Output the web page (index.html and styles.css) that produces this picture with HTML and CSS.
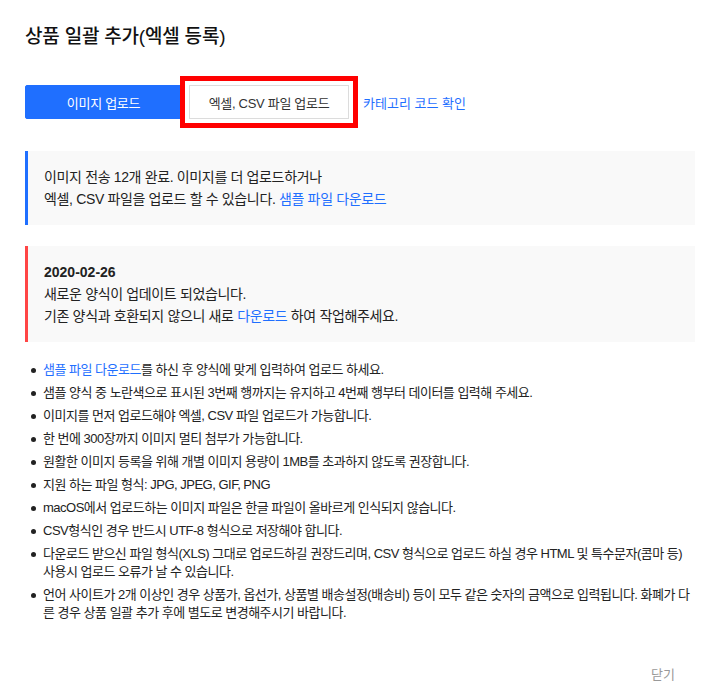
FILE: index.html
```html
<!DOCTYPE html>
<html lang="ko">
<head>
<meta charset="utf-8">
<title>상품 일괄 추가(엑셀 등록)</title>
<link rel="stylesheet" href="styles.css">
</head>
<body>
<div class="page">
  <h1 class="title">상품 일괄 추가(엑셀 등록)</h1>

  <div class="actions">
    <button class="btn btn-primary" type="button">이미지 업로드</button>
    <button class="btn btn-default btn-marked" type="button">엑셀, CSV 파일 업로드</button>
    <a class="link action-link" href="#">카테고리 코드 확인</a>
  </div>

  <div class="notice notice-info">
    <p>이미지 전송 12개 완료. 이미지를 더 업로드하거나</p>
    <p>엑셀, CSV 파일을 업로드 할 수 있습니다. <a class="link" href="#">샘플 파일 다운로드</a></p>
  </div>

  <div class="notice notice-warn">
    <p class="notice-date">2020-02-26</p>
    <p>새로운 양식이 업데이트 되었습니다.</p>
    <p>기존 양식과 호환되지 않으니 새로 <a class="link" href="#">다운로드</a> 하여 작업해주세요.</p>
  </div>

  <ul class="guide">
    <li><a class="link" href="#">샘플 파일 다운로드</a>를 하신 후 양식에 맞게 입력하여 업로드 하세요.</li>
    <li>샘플 양식 중 노란색으로 표시된 3번째 행까지는 유지하고 4번째 행부터 데이터를 입력해 주세요.</li>
    <li>이미지를 먼저 업로드해야 엑셀, CSV 파일 업로드가 가능합니다.</li>
    <li>한 번에 300장까지 이미지 멀티 첨부가 가능합니다.</li>
    <li>원활한 이미지 등록을 위해 개별 이미지 용량이 1MB를 초과하지 않도록 권장합니다.</li>
    <li>지원 하는 파일 형식: JPG, JPEG, GIF, PNG</li>
    <li>macOS에서 업로드하는 이미지 파일은 한글 파일이 올바르게 인식되지 않습니다.</li>
    <li>CSV형식인 경우 반드시 UTF-8 형식으로 저장해야 합니다.</li>
    <li>다운로드 받으신 파일 형식(XLS) 그대로 업로드하길 권장드리며, CSV 형식으로 업로드 하실 경우 HTML 및 특수문자(콤마 등) 사용시 업로드 오류가 날 수 있습니다.</li>
    <li>언어 사이트가 2개 이상인 경우 상품가, 옵선가, 상품별 배송설정(배송비) 등이 모두 같은 숫자의 금액으로 입력됩니다. 화폐가 다른 경우 상품 일괄 추가 후에 별도로 변경해주시기 바랍니다.</li>
  </ul>

  <div class="footer">
    <button class="btn-close" type="button">닫기</button>
  </div>
</div>
</body>
</html>
```

FILE: styles.css
```css
* {
  box-sizing: border-box;
}

body {
  margin: 0;
  background: #fff;
  color: #222;
  font-family: "Liberation Sans", "Noto Sans CJK KR", sans-serif;
}

.page {
  width: 720px;
  padding: 26px 25px 0 25px;
}

.title {
  margin: 0;
  font-size: 19px;
  line-height: 22px;
  font-weight: 500;
  letter-spacing: -0.2px;
  color: #111;
}

.actions {
  display: flex;
  align-items: center;
  margin-top: 37px;
}

.btn {
  height: 34px;
  font-family: inherit;
  font-size: 13px;
  letter-spacing: -0.3px;
  border-radius: 0;
  cursor: pointer;
  padding: 0;
}

.btn-primary {
  width: 157px;
  background: #1f6fff;
  border: 1px solid #1f6fff;
  border-radius: 2px;
  color: #fff;
}

.btn-default {
  width: 160px;
  margin-left: 7px;
  background: #fff;
  border: 1px solid #dcdcdc;
  color: #333;
}

.btn-marked {
  outline: 5px solid #ff0000;
  outline-offset: 4px;
}

.link {
  color: #1f6fff;
  text-decoration: none;
}

.action-link {
  margin-left: 14px;
  font-size: 13px;
}

.notice {
  margin-top: 32px;
  padding: 15px 18px 15px 16px;
  background: #f9f9f9;
  border-left: 3px solid #1f6fff;
  font-size: 14px;
  line-height: 22px;
  letter-spacing: -0.35px;
}

.notice p {
  margin: 0;
}

.notice-warn {
  margin-top: 21px;
  border-left-color: #ff4545;
}

.notice-date {
  font-weight: 700;
  letter-spacing: 0;
}

.guide {
  list-style: none;
  margin: 19px 0 0 0;
  padding: 0 0 0 18px;
  font-size: 13px;
  line-height: 18px;
  letter-spacing: -0.5px;
}

.guide li {
  margin-bottom: 5px;
}

.guide li::before {
  content: "";
  display: inline-block;
  width: 5px;
  height: 5px;
  border-radius: 50%;
  background: #222;
  margin-left: -12px;
  margin-right: 7px;
  vertical-align: middle;
}

.footer {
  display: flex;
  justify-content: flex-end;
  margin-top: 44px;
  padding-right: 20px;
}

.btn-close {
  border: 0;
  background: none;
  padding: 0;
  font-family: inherit;
  font-size: 13px;
  line-height: 18px;
  color: #999;
  cursor: pointer;
}
```
